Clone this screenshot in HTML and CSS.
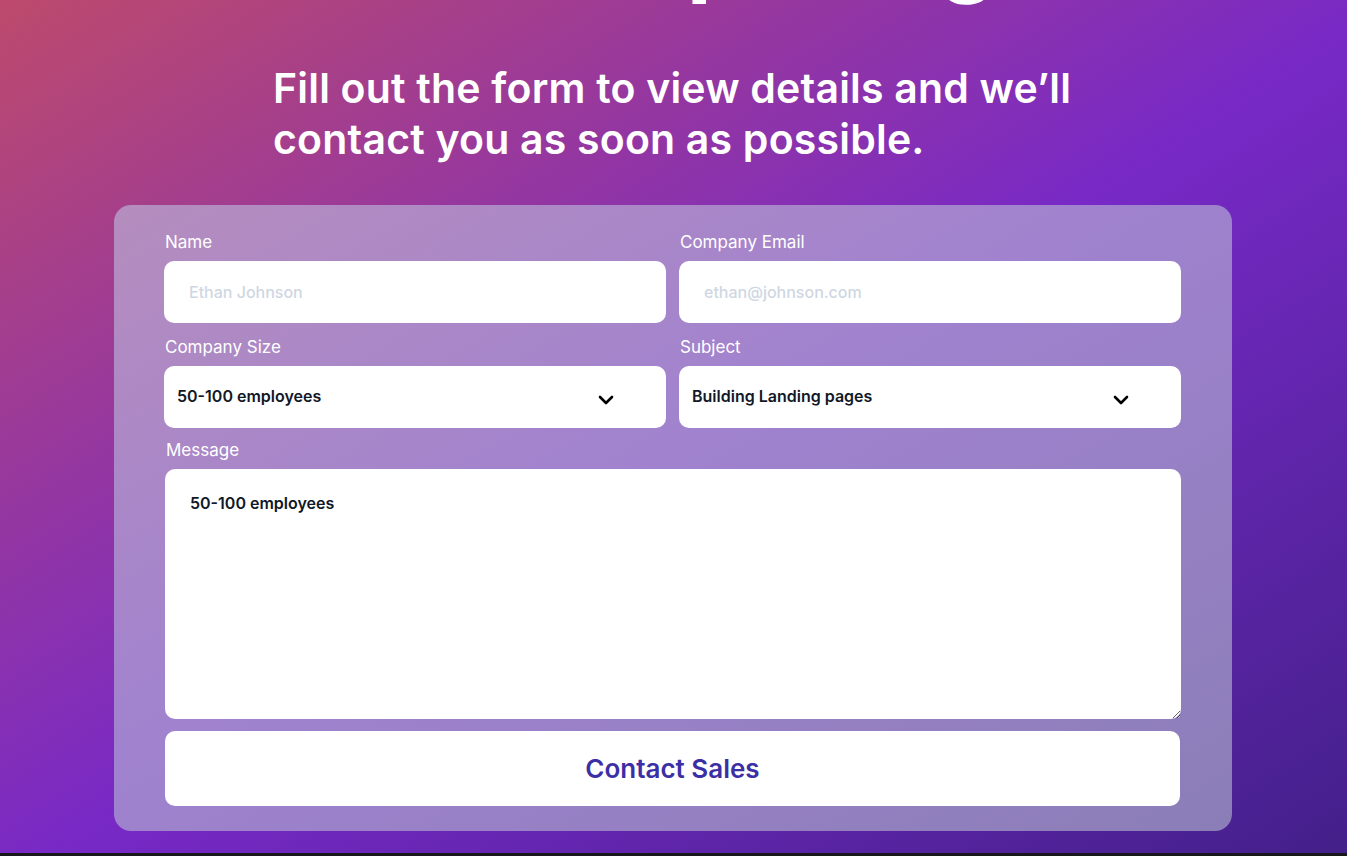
FILE: index.html
```html
<!DOCTYPE html>
<html lang="en">
<head>
<meta charset="utf-8">
<title>Contact Sales</title>
<link rel="stylesheet" href="styles.css">
</head>
<body>
<section class="hero">
  <div class="intro">
    <h1 class="title">Let’s talk pricing</h1>
    <p class="lead">Fill out the form to view details and we’ll contact you as soon as possible.</p>
  </div>
  <form class="card">
    <div class="grid">
      <label class="field">
        <span class="label">Name</span>
        <input class="input" type="text" placeholder="Ethan Johnson">
      </label>
      <label class="field">
        <span class="label">Company Email</span>
        <input class="input" type="email" placeholder="ethan@johnson.com">
      </label>
      <label class="field">
        <span class="label">Company Size</span>
        <span class="select">
          <span class="select-text">50-100 employees</span>
          <svg class="chev" width="16" height="10" viewBox="0 0 16 10"><path d="M2 2 L8 8 L14 2" fill="none" stroke="#000" stroke-width="2.6" stroke-linecap="round" stroke-linejoin="round"/></svg>
        </span>
      </label>
      <label class="field">
        <span class="label">Subject</span>
        <span class="select">
          <span class="select-text">Building Landing pages</span>
          <svg class="chev" width="16" height="10" viewBox="0 0 16 10"><path d="M2 2 L8 8 L14 2" fill="none" stroke="#000" stroke-width="2.6" stroke-linecap="round" stroke-linejoin="round"/></svg>
        </span>
      </label>
    </div>
    <label class="field message">
      <span class="label">Message</span>
      <textarea class="textarea">50-100 employees</textarea>
    </label>
    <button class="submit" type="button">Contact Sales</button>
  </form>
</section>
</body>
</html>
```

FILE: styles.css
```css
* { box-sizing: border-box; }
html, body { margin: 0; padding: 0; }
body {
  background: #18171c;
  font-family: "Inter", "Noto Sans", sans-serif;
  overflow: hidden;
}
.hero {
  height: 853px;
  background: linear-gradient(to bottom right, #bd4a6c 0%, #7829c6 52%, #43208a 100%);
  overflow: hidden;
}
.intro {
  padding-left: 273px;
}
.title {
  margin: -103px 0 0 0;
  font-size: 92px;
  line-height: 110px;
  font-weight: 700;
  color: #fff;
  letter-spacing: -1px;
  white-space: nowrap;
}
.lead {
  margin: 0;
  padding-top: 56px;
  max-width: 850px;
  font-size: 41px;
  line-height: 51px;
  font-weight: 600;
  color: #fff;
  letter-spacing: 0.2px;
}
.card {
  margin: 40px 0 0 114px;
  width: 1118px;
  border-radius: 17px;
  background: linear-gradient(to bottom right, #b58dbe 0%, #a082cf 45%, #8b7eb7 100%);
  padding: 27px 51px 25px 50px;
}
.grid {
  display: grid;
  grid-template-columns: 502px 502px;
  column-gap: 13px;
  row-gap: 14px;
}
.field {
  display: flex;
  flex-direction: column;
}
.label {
  font-size: 17px;
  line-height: 20px;
  color: #fff;
  margin-bottom: 9px;
  padding-left: 1px;
}
.input {
  height: 62px;
  border: none;
  border-radius: 10px;
  background: #fff;
  padding: 0 25px;
  font-family: inherit;
  font-size: 16px;
  font-weight: 500;
  color: #111827;
  outline: none;
}
.input::placeholder { color: #cfd7e3; }
.select {
  height: 62px;
  border-radius: 10px;
  background: #fff;
  display: flex;
  align-items: center;
  justify-content: space-between;
  padding: 0 52px 0 13px;
}
.select-text {
  font-size: 16px;
  font-weight: 600;
  color: #111827;
  margin-top: -3px;
}
.chev { margin-top: 6px; }
.message {
  margin-top: 12px;
  padding-left: 1px;
}
.message .label { margin-bottom: 9px; }
.textarea {
  height: 250px;
  border: none;
  border-radius: 10px;
  background: #fff;
  padding: 24px 25px;
  font-family: inherit;
  font-size: 16px;
  font-weight: 600;
  color: #111827;
  resize: vertical;
  outline: none;
  display: block;
}
.submit {
  display: block;
  margin: 12px 0 0 1px;
  width: 1015px;
  height: 75px;
  border: none;
  border-radius: 10px;
  background: #fff;
  color: #3c2fa6;
  font-family: inherit;
  font-size: 26px;
  font-weight: 600;
  cursor: pointer;
}
```
